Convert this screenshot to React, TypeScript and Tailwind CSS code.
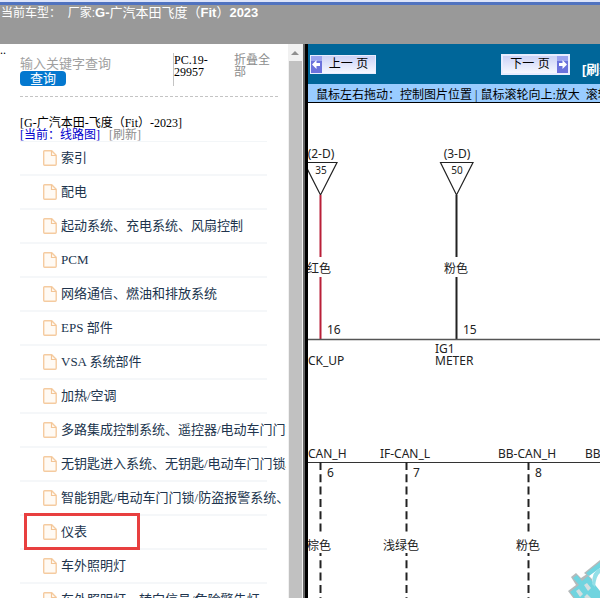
import React, { useState } from "react";

const menuItems = [
  "索引",
  "配电",
  "起动系统、充电系统、风扇控制",
  "PCM",
  "网络通信、燃油和排放系统",
  "EPS 部件",
  "VSA 系统部件",
  "加热/空调",
  "多路集成控制系统、遥控器/电动车门门锁",
  "无钥匙进入系统、无钥匙/电动车门门锁/起动系统",
  "智能钥匙/电动车门门锁/防盗报警系统、起动系统",
  "仪表",
  "车外照明灯",
  "车外照明灯、转向信号/危险警告灯",
];

const FileIcon = () => (
  <svg width="14" height="16" viewBox="0 0 14 16" fill="none" className="shrink-0">
    <path
      d="M1.5 0.7H8.7L13.2 5.2V14.3Q13.2 15.2 12.3 15.2H1.6Q0.7 15.2 0.7 14.3V1.5Q0.7 0.7 1.5 0.7Z"
      fill="#fffaf4"
      stroke="#f5cba0"
      strokeWidth="1.4"
    />
    <path d="M8.5 0.9V5.5H13" stroke="#f3c596" strokeWidth="1.2" />
  </svg>
);

const ArrowIcon = ({ flip = false }: { flip?: boolean }) => (
  <svg width="11" height="17" viewBox="0 0 11 17" className="shrink-0">
    <rect width="11" height="17" fill="#6b72dc" />
    <rect width="11" height="5" fill="#9ba4f0" />
    <path
      d="M1 8.5L5.5 4V7H9V10H5.5V13Z"
      fill="#fff"
      transform={flip ? "translate(11 0) scale(-1 1)" : undefined}
    />
  </svg>
);

const Sidebar = () => {
  const [keyword, setKeyword] = useState("");
  const [selected, setSelected] = useState("仪表");

  return (
    <aside className="flex w-[302px] shrink-0 overflow-hidden bg-white">
      <div className="mr-[2px] min-w-0 flex-1 overflow-hidden">
        <div className="flex">
          <span className="w-5 shrink-0 text-[12px] leading-3">..</span>
          <div className="mr-2 mt-[9px] flex h-11 flex-1 border-b border-dashed border-[#c4c4c4] text-[12px] leading-[12px]">
            <form
              className="w-[153px] pt-[3px]"
              onSubmit={(e) => e.preventDefault()}
            >
              <input
                aria-label="关键字"
                placeholder="输入关键字查询"
                value={keyword}
                onChange={(e) => setKeyword(e.target.value)}
                className="block h-[15px] w-full text-[13px] leading-4 outline-none placeholder:text-[#a0a0a0]"
              />
              <button
                type="submit"
                className="block h-[15px] w-[46px] rounded-[4px] bg-[#0478cf] text-[13px] leading-[15px] text-white"
              >
                查询
              </button>
            </form>
            <div className="h-[33px] w-[61px] border-l border-[#c4c4c4] pr-4 pt-px">
              PC.19-29957
            </div>
            <a href="#collapse" className="w-9 pt-px text-[#8c8c8c]">
              折叠全部
            </a>
          </div>
        </div>

        <div className="pl-5 pt-5 text-[12px] leading-[12px]">
          <p className="text-black">[G-广汽本田-飞度（Fit）-2023]</p>
          <p className="flex gap-[9px]">
            <a href="#current" className="text-[#0000cc]">
              [当前：线路图]
            </a>
            <a href="#refresh" className="text-[#8c8c8c]">
              [刷新]
            </a>
          </p>
        </div>

        <ul className="ml-5 w-[247px] border-t border-[#f3f6f8]">
          {menuItems.map((item) => (
            <li
              key={item}
              className="relative flex h-[34px] items-center border-b-2 border-[#f5f7f9] pl-[23px]"
            >
              <a
                href="#item"
                onClick={() => setSelected(item)}
                className="flex items-center gap-1 whitespace-nowrap text-[13px] leading-4 text-[#20344d]"
              >
                <FileIcon />
                {item}
              </a>
              {selected === item && (
                <span className="pointer-events-none absolute -bottom-[2px] left-1 -top-[3px] w-[116px] border-3 border-[#e83f3f]" />
              )}
            </li>
          ))}
        </ul>
      </div>

      {/* Scrollbar */}
      <div className="flex w-[14px] shrink-0 flex-col bg-[#f1f1f1]">
        <div className="flex h-[17px] items-center justify-center">
          <svg width="8" height="4" viewBox="0 0 8 4">
            <path d="M0 4L4 0L8 4Z" fill="#8f8f8f" />
          </svg>
        </div>
        <div className="ml-px flex-1 bg-[#c1c1c1]" />
      </div>
    </aside>
  );
};

const Diagram = () => (
  <svg
    className="block min-h-0 w-full flex-1 font-['Noto_Sans','Noto_Sans_CJK_SC',sans-serif] text-[12px]"
    fill="#222"
  >
    {/* Upper connectors */}
    <g fill="none" stroke="#222" strokeWidth="1.2">
      <path d="M-4 59.5H29L12.5 92Z" />
      <path d="M132.5 59.5H165L148.5 92Z" />
    </g>
    <path d="M12.5 92V154M12.5 174V236" stroke="#b91f38" strokeWidth="2" />
    <path d="M148.5 92V154M148.5 174V236" stroke="#222" strokeWidth="2" />
    <path d="M0 236.5H2000" stroke="#555" strokeWidth="1.5" />
    <g textAnchor="middle">
      <text x="13" y="55">(2-D)</text>
      <text x="149" y="55">(3-D)</text>
      <text x="13" y="71" className="text-[10px]">35</text>
      <text x="149" y="71" className="text-[10px]">50</text>
      <text x="11" y="170">红色</text>
      <text x="148" y="170">粉色</text>
    </g>
    <text x="19" y="231">16</text>
    <text x="155" y="231">15</text>
    <text x="0" y="262">CK_UP</text>
    <text x="127" y="250">IG1</text>
    <text x="127" y="262">METER</text>

    {/* CAN bus lines */}
    <path d="M0 359.5H2000" stroke="#333" strokeWidth="1.2" />
    <g stroke="#222" strokeWidth="2" strokeDasharray="8 4.3">
      <path d="M12.5 359V429M98.5 359V429M220.5 359V429" />
      <path d="M12.5 450V2000M98.5 450V2000M220.5 450V2000" strokeDashoffset="5" />
    </g>
    <g textAnchor="middle">
      <text x="97" y="355">IF-CAN_L</text>
      <text x="219" y="355">BB-CAN_H</text>
      <text x="11" y="447">棕色</text>
      <text x="93" y="447">浅绿色</text>
      <text x="220" y="447">粉色</text>
    </g>
    <text x="0" y="355">CAN_H</text>
    <text x="277" y="355">BB-CAN_L</text>
    <text x="19" y="374">6</text>
    <text x="105" y="374">7</text>
    <text x="227" y="374">8</text>

    {/* Watermark corner */}
    <path
      d="M263 474L268 470L273 475L279 471L284 476V500H269L260 488L268 482ZM276 470L292 457V464L280 473Z"
      fill="#b4babb"
    />
    <path
      d="M265 475L269 472L274 478L280 473L292 488V500H271L262 489L271 482ZM278 470L292 459V465L281 473Z"
      fill="#70d4df"
    />
    <path d="M284 481Q284 468 292 465V470Q288 473 287 484Z" fill="#93dfe7" />
    <path
      d="M268 488L271 486L275 491L272 494ZM276 482L279 480L283 485L280 488ZM276 494L279 491L284 496L281 498Z"
      fill="#d3dfe0"
    />
  </svg>
);

const App = () => {
  return (
    <div className="flex h-screen flex-col overflow-hidden bg-white font-['Liberation_Serif','Noto_Sans_CJK_SC',serif] text-black">
      <header className="h-11 shrink-0 border-t-2 border-[#dce4fa] bg-[#999999] font-['Liberation_Sans','Noto_Sans_CJK_SC',sans-serif]">
        <div className="h-[3px] bg-[#5073c0]" />
        <h1 className="flex whitespace-pre pl-px text-[12px] leading-4 text-white">
          <span>当前车型：{"  "}厂家:</span>
          <span className="text-[13px]">
            <b>G-</b>广汽本田飞度（<b>Fit</b>）<b>2023</b>
          </span>
        </h1>
      </header>

      <div className="flex min-h-0 flex-1">
        <Sidebar />
        <div className="w-[3px] shrink-0 border-l border-[#f1f1f1] bg-[#666666]" />

        <main className="flex min-w-0 flex-1 flex-col overflow-hidden border-l-3 border-black">
          <div className="flex h-10 shrink-0 items-center overflow-hidden whitespace-nowrap bg-[#006699] pl-[2px] font-['Liberation_Sans','Noto_Sans_CJK_SC',sans-serif]">
            <button className="flex h-[19px] w-[66px] shrink-0 items-center border border-[#e8edff] bg-linear-to-b from-[#ccd2f6] to-[#f6f8ff] text-[12px]">
              <ArrowIcon />
              <span className="flex-1 text-center">上一 页</span>
            </button>
            <button className="ml-[125px] flex h-[21px] w-[69px] shrink-0 items-center border-2 border-[#e8edff] bg-linear-to-b from-[#ccd2f6] to-[#f6f8ff] text-[12px]">
              <span className="flex-1 text-center">下一 页</span>
              <ArrowIcon flip />
            </button>
            <a href="#reload" className="ml-3 pt-3 text-[13px] font-bold text-white">
              [刷新]
            </a>
          </div>
          <p className="h-[19px] shrink-0 overflow-hidden whitespace-pre border-b border-black bg-[#99ccff] pl-2 pt-px text-[12px] leading-5">
            鼠标左右拖动：控制图片位置 | 鼠标滚轮向上:放大{"  "}滚轮向下:缩小
          </p>
          <Diagram />
        </main>
      </div>
    </div>
  );
};

export default App;
